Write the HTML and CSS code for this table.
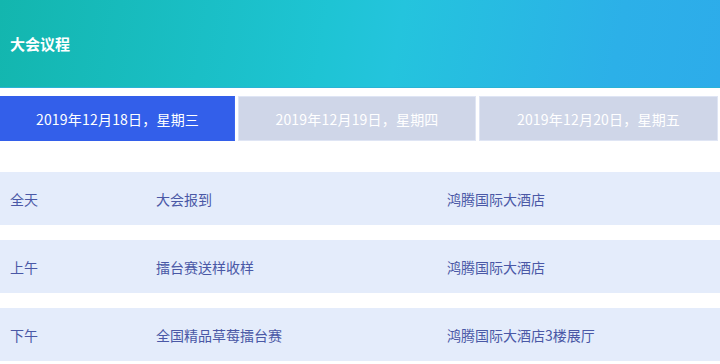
FILE: index.html
```html
<!DOCTYPE html>
<html lang="zh">
<head>
<meta charset="utf-8">
<link rel="stylesheet" href="styles.css">
</head>
<body>
<header class="hero"><h1 class="title">大会议程</h1></header>
<nav class="tabs">
  <div class="tab active">2019年12月18日，星期三</div>
  <div class="tab">2019年12月19日，星期四</div>
  <div class="tab">2019年12月20日，星期五</div>
</nav>
<section class="list">
  <div class="row"><span class="c1">全天</span><span class="c2">大会报到</span><span class="c3">鸿腾国际大酒店</span></div>
  <div class="row"><span class="c1">上午</span><span class="c2">擂台赛送样收样</span><span class="c3">鸿腾国际大酒店</span></div>
  <div class="row"><span class="c1">下午</span><span class="c2">全国精品草莓擂台赛</span><span class="c3">鸿腾国际大酒店3楼展厅</span></div>
</section>
</body>
</html>
```

FILE: styles.css
```css
* { box-sizing: border-box; margin: 0; padding: 0; }
html, body { width: 720px; height: 364px; overflow: hidden; background: #fff; }
body { font-family: "Noto Sans CJK SC", "Noto Sans", sans-serif; }
.hero {
  height: 88px;
  background: linear-gradient(100deg, #13b6ae 0%, #1ec4d4 45%, #24c4dd 55%, #2cb0e8 85%, #2dacea 100%);
  border-bottom: 1px solid #2ab3d6;
  display: flex;
  align-items: center;
  padding-left: 10px;
}
.title { color: #fff; font-size: 15px; font-weight: 700; line-height: 20px; }
.tabs {
  margin-top: 8px;
  display: grid;
  grid-template-columns: 235px 238px 239px;
  column-gap: 3px;
  width: 718px;
  height: 45px;
}
.tab {
  background: #cfd6e8;
  border: 1px solid #dfe5f4;
  color: #fff;
  font-size: 14px;
  letter-spacing: 0.2px;
  display: flex;
  align-items: center;
  justify-content: center;
}
.tab.active { background: #335fea; border-color: #335fea; border-right-color: #3a66f0; }
.list { margin-top: 31px; display: flex; flex-direction: column; gap: 15px; }
.row {
  height: 53px;
  background: #e4ecfb;
  display: flex;
  align-items: center;
  color: #4a58a6;
  font-size: 14px;
}
.c1 { width: 156px; padding-left: 10px; }
.c2 { width: 291px; }
.c3 { flex: 1; }
```
